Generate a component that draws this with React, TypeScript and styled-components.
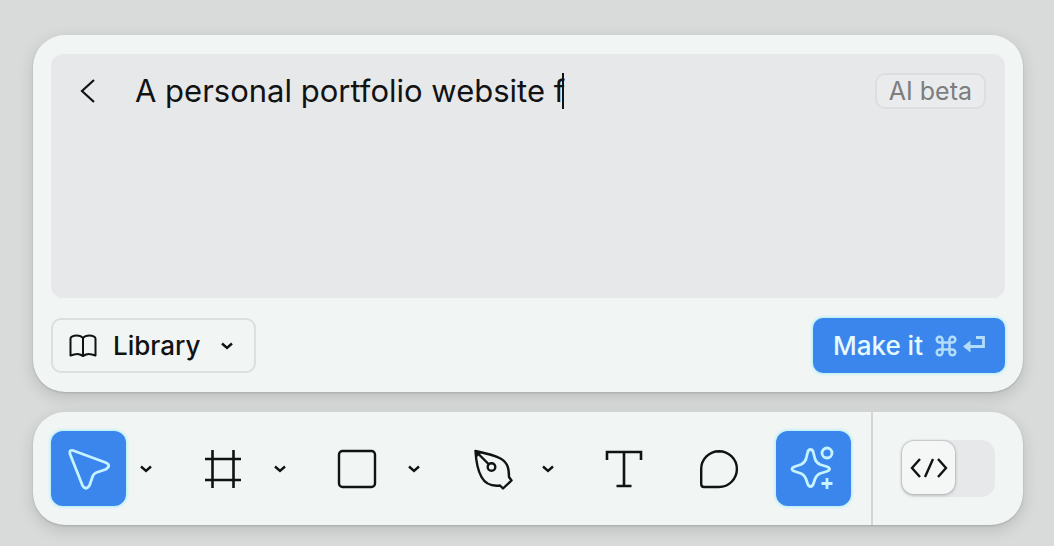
import React, { useState } from "react";
import styled, { createGlobalStyle, css } from "styled-components";

const colors = {
  canvas: "#d9dbda",
  surface: "#f1f5f4",
  field: "#e7e8ea",
  line: "#dcdfdf",
  ink: "#111212",
  muted: "#7b7d7e",
  blue: "#3b86ec",
  glow: "#a9eefa",
  ice: "#c5f3ff",
};

const GlobalStyle = createGlobalStyle`
  *, *::before, *::after { box-sizing: border-box; }
  html { background: ${colors.canvas}; }
  body {
    margin: 0;
    color: ${colors.ink};
    font-family: Inter, "Liberation Sans", sans-serif;
  }
  button, input { font: inherit; color: inherit; }
  svg { display: block; flex: none; fill: none; overflow: visible; }
`;

const Page = styled.main`
  display: flex;
  flex-direction: column;
  gap: 20px;
  padding: 35px 31px 21px 33px;
`;

const surface = css`
  background: ${colors.surface};
  border-radius: 32px;
  box-shadow: 0 1px 2px rgba(0, 0, 0, 0.14), 0 5px 16px rgba(0, 0, 0, 0.14);
`;

const PromptPanel = styled.form`
  ${surface}
  display: flex;
  flex-direction: column;
  gap: 20px;
  padding: 19px 18px;
`;

const PromptField = styled.div`
  display: flex;
  flex-direction: column;
  min-height: 244px;
  padding: 17px 19px;
  border-radius: 12px;
  background: ${colors.field};
`;

const PromptHeader = styled.div`
  display: flex;
  align-items: center;
`;

const BackButton = styled.button`
  display: flex;
  align-items: center;
  justify-content: center;
  width: 36px;
  height: 40px;
  padding: 0;
  border: 0;
  background: none;
`;

const PromptEntry = styled.div`
  display: flex;
  flex: 1;
  align-items: center;
  min-width: 0;
  height: 40px;
  padding-left: 29px;
`;

const PromptInput = styled.input`
  field-sizing: content;
  max-width: 100%;
  padding: 0;
  border: 0;
  outline: 0;
  background: none;
  caret-color: transparent;
  font-size: 31px;
  line-height: 40px;
`;

const Caret = styled.span`
  width: 2px;
  height: 36px;
  margin-left: -3px;
  background: ${colors.ink};
`;

const Badge = styled.span`
  padding: 0 12px;
  border: 2px solid #dddfdf;
  border-radius: 10px;
  background: #eaebec;
  color: ${colors.muted};
  font-size: 25px;
  line-height: 32px;
  white-space: nowrap;
`;

const Actions = styled.div`
  display: flex;
  justify-content: space-between;
`;

const ActionButton = styled.button<{ $primary?: boolean }>`
  display: flex;
  align-items: center;
  height: 55px;
  padding: 0 20px 0 16px;
  border: 2px solid ${colors.line};
  border-radius: 10px;
  background: transparent;
  font-size: 26px;
  font-weight: 500;
  white-space: nowrap;
  gap: 16px;
  ${(p) =>
    p.$primary &&
    css`
      border: 0;
      gap: 8px;
      padding: 0 20px;
      background: ${colors.blue};
      color: #e6faff;
      box-shadow: 0 0 3px 1px ${colors.glow};
    `}
`;

const ActionLabel = styled.span`
  padding-right: 4px;
`;

const Shortcut = styled.kbd`
  display: flex;
  align-items: center;
  gap: 6px;
  color: #b4dcfb;
`;

const Toolbar = styled.div`
  ${surface}
  display: flex;
  height: 113px;
`;

const Tools = styled.div`
  display: flex;
  flex: 1;
  align-items: center;
  justify-content: space-between;
  padding: 0 20px 0 18px;
`;

const ToolGroup = styled.div`
  display: flex;
  align-items: center;
`;

const ToolButton = styled.button<{ $active?: boolean }>`
  display: flex;
  align-items: center;
  justify-content: center;
  width: 75px;
  height: 75px;
  padding: 0;
  border: 0;
  border-radius: 12px;
  background: none;
  ${(p) =>
    p.$active &&
    css`
      background: ${colors.blue};
      color: ${colors.ice};
      box-shadow: 0 0 3px 1px ${colors.glow};
    `}
`;

const CaretButton = styled.button`
  display: flex;
  align-items: center;
  justify-content: center;
  width: 40px;
  height: 75px;
  padding: 0;
  border: 0;
  background: none;
`;

const ModeSection = styled.div`
  display: flex;
  align-items: center;
  padding: 0 28px;
  border-left: 2px solid #d4d6d6;
`;

const ModeSwitch = styled.label<{ $on: boolean }>`
  display: flex;
  align-items: flex-start;
  justify-content: ${(p) => (p.$on ? "flex-end" : "flex-start")};
  width: 94px;
  height: 57px;
  padding: 1px;
  border-radius: 14px;
  background: ${colors.field};
`;

const SwitchInput = styled.input`
  position: absolute;
  opacity: 0;
  pointer-events: none;
`;

const Knob = styled.span`
  display: flex;
  align-items: center;
  justify-content: center;
  width: 53px;
  height: 53px;
  border-radius: 12px;
  background: #f5f7f7;
  box-shadow: 0 0 2px 1px rgba(0, 0, 0, 0.16), 0 2px 4px rgba(0, 0, 0, 0.1);
`;

const Chevron = () => (
  <svg width="14" height="8" viewBox="0 0 14 8" stroke="currentColor" strokeWidth="2.4" aria-hidden="true">
    <path d="M2 1.5 7 6l5-4.5" />
  </svg>
);

const BackIcon = () => (
  <svg width="16" height="24" viewBox="0 0 16 24" stroke="currentColor" strokeWidth="2.2" aria-hidden="true">
    <path d="M14 1 2 12l12 11" />
  </svg>
);

const BookIcon = () => (
  <svg width="28" height="24" viewBox="0 0 28 24" stroke="currentColor" strokeWidth="2" strokeLinejoin="round" aria-hidden="true">
    <path d="M14 4C12.500 2 10 1.500 7.500 1.500 4.500 1.500 1.500 3 1.500 4.500V21.500C4 20.500 9 19.500 11 20.500L14 22 17 20.500C19 19.500 24 20.500 26.500 21.500V4.500C26.500 3 23.500 1.500 20.500 1.500 18 1.500 15.500 2 14 4ZM14 4V22" />
  </svg>
);

const CommandIcon = () => (
  <svg width="22" height="22" viewBox="0 0 22 22" stroke="currentColor" strokeWidth="2.5" aria-hidden="true">
    <path d="M7.500 7.500H14.500V14.500H7.500ZM7.500 7.500V4.700A2.900 2.900 0 1 0 4.600 7.500ZM14.500 7.500H17.400A2.900 2.900 0 1 0 14.500 4.700ZM14.500 14.500V17.300A2.900 2.900 0 1 0 17.400 14.500ZM7.500 14.500H4.600A2.900 2.900 0 1 0 7.500 17.300Z" />
  </svg>
);

const ReturnIcon = () => (
  <svg width="22" height="22" viewBox="0 2 22 22" stroke="currentColor" strokeWidth="2.8" aria-hidden="true">
    <path d="M13 4.500H20.500V13.500H6" />
    <path d="M0 13.500 7.500 7.500V19.500Z" fill="currentColor" stroke="none" />
  </svg>
);

const MoveIcon = () => (
  <svg width="42" height="42" viewBox="0 0 42 42" stroke="currentColor" strokeWidth="2.8" strokeLinejoin="round" aria-hidden="true">
    <path d="M5 2.500 37.500 14.500Q44 17.500 37.500 21.500L28.500 24.500Q25.800 25.500 24.800 28L21.500 37.500Q17.800 43 14.500 37.500L2 6Q1 1.500 5 2.500Z" />
  </svg>
);

const FrameIcon = () => (
  <svg width="38" height="38" viewBox="0 0 38 38" stroke="currentColor" strokeWidth="2.6" aria-hidden="true">
    <path d="M8.500 0V38M29.500 0V38M1 9H37M1 30H37" />
  </svg>
);

const RectangleIcon = () => (
  <svg width="38" height="38" viewBox="0 0 38 38" stroke="currentColor" strokeWidth="2.4" aria-hidden="true">
    <rect x="1" y="1" width="36" height="36" rx="3.500" />
  </svg>
);

const PenIcon = () => (
  <svg width="38" height="40" viewBox="0 0 38 40" stroke="currentColor" strokeWidth="2.4" strokeLinejoin="round" aria-hidden="true">
    <path d="M3.500 2C13 4 22 6 28.500 9.500 36.500 14 37 21 37 28L39.500 31.500 31 39.500 28 36.500C19 37.500 13 34.500 9.500 28 5 20 4 11 3.500 2ZM3.500 2 17 15.500" />
    <circle cx="19.500" cy="18" r="3.800" />
    <path d="M2.500 1 9.500 3.500 5 8Z" fill="currentColor" stroke="none" />
  </svg>
);

const TextIcon = () => (
  <svg width="38" height="38" viewBox="1 0 38 38" stroke="currentColor" strokeWidth="2.600" aria-hidden="true">
    <path d="M2 10V2H36V10M19 2V36M11.500 36H26.500" />
  </svg>
);

const CommentIcon = () => (
  <svg width="38" height="38" viewBox="0 0 38 38" stroke="currentColor" strokeWidth="2.4" strokeLinejoin="round" aria-hidden="true">
    <path d="M19 1.200A17.900 17.900 0 0 1 19 37H4Q1.200 37 1.200 34V19A17.900 17.900 0 0 1 19 1.200Z" />
  </svg>
);

const SparkleIcon = () => (
  <svg width="44" height="44" viewBox="1 2 44 44" stroke="currentColor" strokeWidth="2.800" strokeLinejoin="round" aria-hidden="true">
    <path d="M20.500 4.500Q22.800 4.500 23.500 8L25 14Q26.500 18 30 19.500L36.500 21.500Q39.500 22.500 39.500 24 39.500 25.500 36.500 26.500L30 28.500Q26.500 30 25 34L23.500 38.500Q22.500 41.500 20.500 41.500 18.500 41.500 17.500 38.500L16 34Q14.500 30 11 28.500L5 26.500Q2 25.500 2 24 2 22.500 5 21.500L11 19.500Q14.500 18 16 14L17.500 8Q18.200 4.500 20.500 4.500Z" />
    <circle cx="37" cy="8" r="5" />
    <path d="M37 33V44M31.500 38.500H42.500" />
  </svg>
);

const CodeIcon = () => (
  <svg width="38" height="20" viewBox="0 0 38 20" stroke="currentColor" strokeWidth="2.400" aria-hidden="true">
    <path d="M10 1 2 10 10 19M28 1 36 10 28 19M23 1 15 19" />
  </svg>
);

const tools = [
  { id: "move", label: "Move", Icon: MoveIcon, menu: true },
  { id: "frame", label: "Frame", Icon: FrameIcon, menu: true },
  { id: "shape", label: "Rectangle", Icon: RectangleIcon, menu: true },
  { id: "pen", label: "Pen", Icon: PenIcon, menu: true },
  { id: "text", label: "Text", Icon: TextIcon, menu: false },
  { id: "comment", label: "Comment", Icon: CommentIcon, menu: false },
];

export default function App() {
  const [prompt, setPrompt] = useState("A personal portfolio website f");
  const [tool, setTool] = useState("move");
  const [assistant, setAssistant] = useState(true);
  const [devMode, setDevMode] = useState(false);

  return (
    <>
      <GlobalStyle />
      <Page>
        <PromptPanel onSubmit={(e) => e.preventDefault()}>
          <PromptField>
            <PromptHeader>
              <BackButton type="button" aria-label="Back">
                <BackIcon />
              </BackButton>
              <PromptEntry>
                <PromptInput
                  type="text"
                  aria-label="Prompt"
                  value={prompt}
                  onChange={(e) => setPrompt(e.target.value)}
                />
                <Caret aria-hidden="true" />
              </PromptEntry>
              <Badge>AI beta</Badge>
            </PromptHeader>
          </PromptField>
          <Actions>
            <ActionButton type="button" aria-haspopup="menu">
              <BookIcon />
              <ActionLabel>Library</ActionLabel>
              <Chevron />
            </ActionButton>
            <ActionButton type="submit" $primary>
              <ActionLabel>Make it</ActionLabel>
              <Shortcut aria-label="Command Return">
                <CommandIcon />
                <ReturnIcon />
              </Shortcut>
            </ActionButton>
          </Actions>
        </PromptPanel>

        <Toolbar role="toolbar" aria-label="Tools">
          <Tools>
            {tools.map(({ id, label, Icon, menu }) => (
              <ToolGroup key={id}>
                <ToolButton
                  type="button"
                  aria-label={label}
                  aria-pressed={tool === id}
                  $active={tool === id}
                  onClick={() => setTool(id)}
                >
                  <Icon />
                </ToolButton>
                {menu && (
                  <CaretButton type="button" aria-label={`${label} options`} aria-haspopup="menu">
                    <Chevron />
                  </CaretButton>
                )}
              </ToolGroup>
            ))}
            <ToolButton
              type="button"
              aria-label="AI actions"
              aria-pressed={assistant}
              $active={assistant}
              onClick={() => setAssistant(!assistant)}
            >
              <SparkleIcon />
            </ToolButton>
          </Tools>
          <ModeSection>
            <ModeSwitch $on={devMode}>
              <SwitchInput
                type="checkbox"
                role="switch"
                aria-label="Dev mode"
                checked={devMode}
                onChange={(e) => setDevMode(e.target.checked)}
              />
              <Knob>
                <CodeIcon />
              </Knob>
            </ModeSwitch>
          </ModeSection>
        </Toolbar>
      </Page>
    </>
  );
}
